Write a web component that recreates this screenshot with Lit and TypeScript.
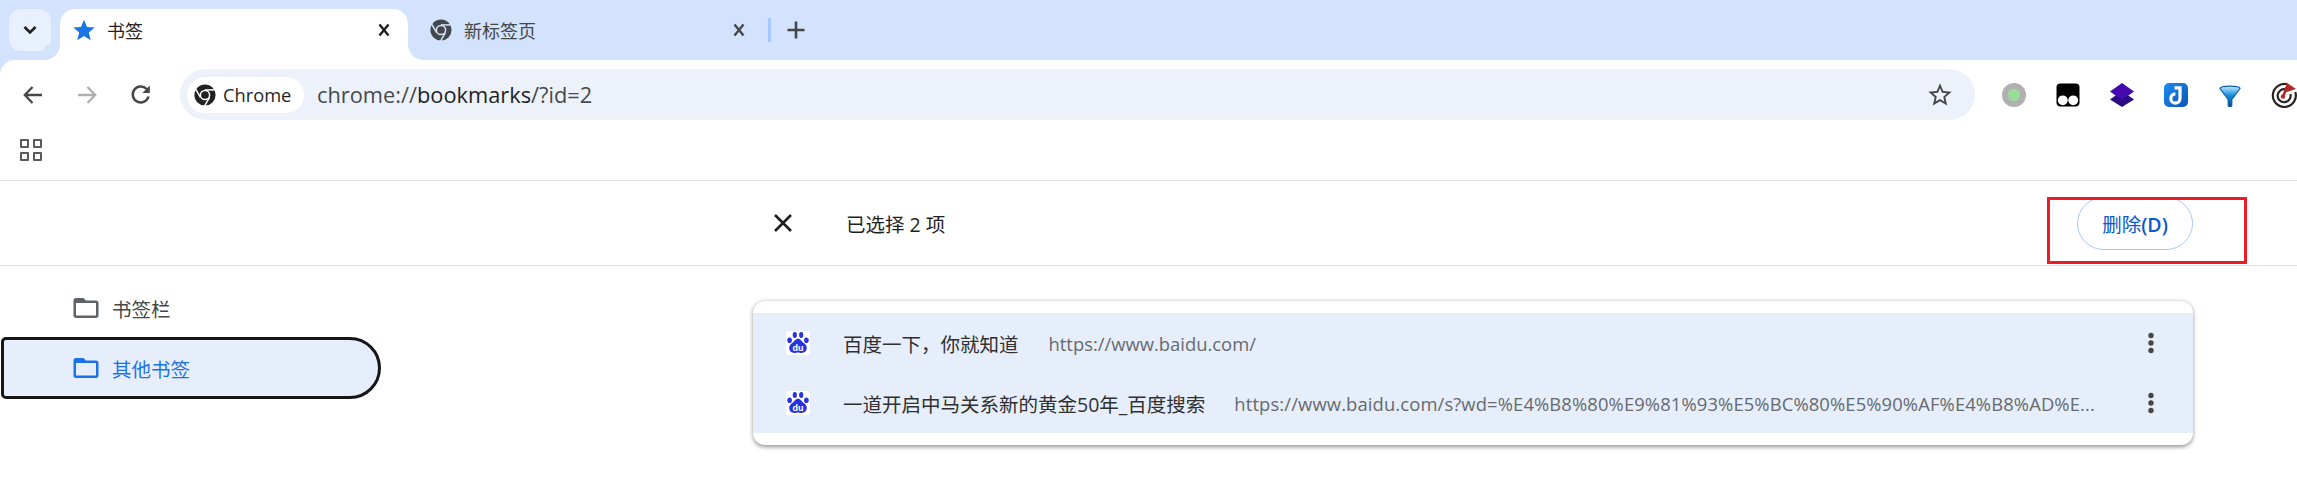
import { LitElement, html, css, svg } from "lit";
import { customElement } from "lit/decorators.js";

const chromeIcon = html`<svg class="i24" viewBox="0 0 24 24">
  <circle cx="12" cy="12" r="10.6" fill="#222"></circle>
  <g stroke="#fff" stroke-width="1.500" fill="none">
    <line x1="12" y1="6.900" x2="23" y2="6.900"></line>
    <line x1="12" y1="6.900" x2="23" y2="6.900" transform="rotate(120 12 12)"></line>
    <line x1="12" y1="6.900" x2="23" y2="6.900" transform="rotate(240 12 12)"></line>
    <circle cx="12" cy="12" r="4.600" fill="#222"></circle>
  </g>
</svg>`;

const chromeIconGrey = html`<svg class="i24" viewBox="0 0 24 24">
  <circle cx="12" cy="12" r="10.600" fill="#44484d"></circle>
  <g stroke="#d3e3fd" stroke-width="1.500" fill="none">
    <line x1="12" y1="6.900" x2="23" y2="6.900"></line>
    <line x1="12" y1="6.900" x2="23" y2="6.900" transform="rotate(120 12 12)"></line>
    <line x1="12" y1="6.900" x2="23" y2="6.900" transform="rotate(240 12 12)"></line>
    <circle cx="12" cy="12" r="4.600" fill="#44484d"></circle>
  </g>
</svg>`;

const closeX = (c: string) => html`<svg class="i20" viewBox="0 0 20 20">
  <path d="M5.500 4.500 L14.500 15.500 M14.500 4.500 L5.500 15.500" stroke=${c} stroke-width="2.400" fill="none"></path>
</svg>`;

const folderPath = svg`<path d="M20 6h-8l-2-2H4c-1.100 0-1.990.9-1.990 2L2 18c0 1.100.9 2 2 2h16c1.100 0 2-.9 2-2V8c0-1.100-.9-2-2-2zm0 12H4V8h16v10z"></path>`;

const baidu = html`<div class="fav"><svg class="i24" viewBox="0 0 24 24">
  <rect width="24" height="24" rx="2" fill="#fff"></rect>
  <g fill="#2932e1">
    <ellipse cx="8.800" cy="4" rx="2.100" ry="2.900"></ellipse>
    <ellipse cx="15.200" cy="4" rx="2.100" ry="2.900"></ellipse>
    <ellipse cx="3.600" cy="9.200" rx="2.300" ry="2.800"></ellipse>
    <ellipse cx="20.400" cy="9.200" rx="2.300" ry="2.800"></ellipse>
    <path d="M12 7.800c2.800 0 3.400 2.600 5.400 4 2 1.300 3.400 2.800 3.400 5 0 3.400-2.600 5.200-5.200 5.200-1.500 0-2.500-.5-3.600-.5s-2.100.5-3.700.5c-2.600 0-5.100-1.800-5.100-5.200 0-2.200 1.400-3.700 3.400-5 2-1.400 2.600-4 5.400-4z"></path>
  </g>
  <text x="12" y="19.800" text-anchor="middle" class="du">du</text>
</svg></div>`;

const menuDots = html`<svg class="dots" viewBox="0 0 6 24" fill="#444746">
  <circle cx="3" cy="4.500" r="2.700"></circle><circle cx="3" cy="12" r="2.700"></circle><circle cx="3" cy="19.500" r="2.700"></circle>
</svg>`;

const exts = [
  html`<svg class="i26" viewBox="0 0 26 26"><circle cx="13" cy="13" r="12" fill="#b0b0b0"></circle><circle cx="13" cy="13" r="6.200" fill="#98dc98"></circle></svg>`,
  html`<svg class="i26" viewBox="0 0 26 26"><rect x="1.500" y="1.500" width="23" height="23" rx="4" fill="#000"></rect><circle cx="7.800" cy="18.300" r="4.900" fill="#fff"></circle><circle cx="18.200" cy="18.300" r="4.900" fill="#fff"></circle></svg>`,
  html`<svg class="i26" viewBox="0 0 26 26"><path d="M13 9 25 17.500 13 25 1 17.500z" fill="#2b0a82"></path><path d="M13 1 25 9.500 13 18 1 9.500z" fill="#4309ac"></path></svg>`,
  html`<svg class="i26" viewBox="0 0 26 26"><defs><linearGradient id="jg" x1="0" y1="0" x2="1" y2="1"><stop offset="0" stop-color="#1e8cf0"></stop><stop offset="1" stop-color="#0b55b5"></stop></linearGradient></defs><rect x="1" y="1" width="24" height="24" rx="5" fill="url(#jg)"></rect><path d="M11.500 5.800h5.500V16.500a4.600 4.600 0 1 1-4.600-4.600" fill="none" stroke="#fff" stroke-width="3.200"></path></svg>`,
  html`<svg class="i26" viewBox="0 0 26 26"><defs><linearGradient id="fg" x1="0" y1="0" x2="0" y2="1"><stop offset="0" stop-color="#c8ecff"></stop><stop offset=".45" stop-color="#1a8ee0"></stop><stop offset="1" stop-color="#0a4a80"></stop></linearGradient></defs><path d="M3 6.500C3 3.200 23 3.200 23 6.500L14.800 17.500V23.500c0 1.300-3.600 1.300-3.600 0V17.500z" fill="url(#fg)" stroke="#0a5fa8" stroke-width="1.200"></path></svg>`,
  html`<svg class="i26" viewBox="0 0 26 26" fill="none"><path d="M16 2.300A11.500 11.500 0 1 0 24.300 10" stroke="#2a2422" stroke-width="2.200"></path><path d="M15 7.500A6.500 6.500 0 1 0 19.400 12" stroke="#2a2422" stroke-width="2.200"></path><path d="M12.500 14 L15.500 5" stroke="#a82626" stroke-width="2.400"></path><path d="M15.500 0.500 L25 7 L14.500 10.500z" fill="#b02a2a"></path><circle cx="12" cy="14.500" r="2.200" fill="#b02a2a"></circle></svg>`,
];

@customElement("app-root")
export class AppRoot extends LitElement {
  static styles = css`
    :host {
      display: block;
      width: 2297px;
      height: 486px;
      overflow: hidden;
      background: #fff;
      position: relative;
      font-family: "Open Sans", "Noto Sans CJK SC", sans-serif;
      color: #1f1f1f;
    }
    svg { display: block; flex: none; }
    .i20 { width: 20px; height: 20px; }
    .i24 { width: 24px; height: 24px; }
    .i26 { width: 26px; height: 26px; }
    .i28 { width: 28px; height: 28px; }
    .i30 { width: 30px; height: 30px; }

    .chrome { background: #d3e3fd; }
    .strip { height: 60px; box-sizing: border-box; padding: 9px 0 0 9px; display: flex; align-items: flex-start; }
    .tabsearch { width: 42px; height: 42px; border-radius: 12px; background: #e8f0fe; display: flex; align-items: center; justify-content: center; margin-right: 9px; }
    .tab { height: 51px; box-sizing: border-box; display: flex; align-items: center; font-size: 18px; padding-bottom: 9px; flex: none; }
    .tab.active { width: 348px; background: #fff; border-radius: 15px 15px 0 0; padding-left: 12px; padding-right: 14px; gap: 11px; position: relative; }
    .tab.active::before, .tab.active::after { content: ""; position: absolute; bottom: 0; width: 15px; height: 15px; background: radial-gradient(circle at var(--cx) 0, #d3e3fd 14.500px, #fff 15px); }
    .tab.active::before { left: -15px; --cx: 0; }
    .tab.active::after { right: -15px; --cx: 15px; }
    .tab.other { width: 360px; padding-left: 21px; padding-right: 19px; gap: 11px; color: #444746; }
    .tab .x { margin-left: auto; }
    .sep { width: 2.500px; height: 24px; background: #a8c7fa; margin-top: 9px; flex: none; }
    .plus { margin: 9px 0 0 13px; }

    .toolbar { background: #fff; border-top-left-radius: 15px; height: 64px; box-sizing: border-box; padding: 9px 0 4px 6px; display: flex; align-items: center; }
    .nav { width: 54px; display: flex; justify-content: center; flex: none; }
    .omni { width: 1795px; height: 51px; margin-left: 12px; flex: none; box-sizing: border-box; background: #ecf1fa; border-radius: 26px; padding: 0 21px 0 7px; display: flex; align-items: center; }
    .chip { width: 117px; height: 36px; box-sizing: border-box; background: #fff; border-radius: 18px; padding-left: 6px; display: flex; align-items: center; gap: 6px; font-size: 18.300px; flex: none; }
    .url { margin-left: 13px; font-size: 21.800px; color: #474a4d; }
    .url b { font-weight: 400; color: #1f1f1f; }
    .omni .i28 { margin-left: auto; }
    .exts { display: flex; margin-left: 12px; flex: none; }
    .ext { width: 54px; display: flex; justify-content: center; flex: none; }

    .bmbar { height: 57px; box-sizing: border-box; border-bottom: 1.500px solid #e0e0e0; padding: 15px 0 0 20px; }
    .apps { display: grid; grid-template-columns: 9px 9px; grid-auto-rows: 9px; gap: 4px; }
    .apps i { border: 2px solid #5a5a5a; border-radius: 1px; }

    .select { height: 85px; box-sizing: border-box; border-bottom: 1.500px solid #e0e0e0; display: flex; align-items: center; padding-left: 770px; padding-right: 104px; }
    .closebig { width: 26px; height: 26px; }
    .count { margin-left: 50px; font-size: 19.500px; }
    .del { margin-left: auto; width: 116px; height: 53px; box-sizing: border-box; border: 1.500px solid #a8c7fa; border-radius: 27px; display: flex; align-items: center; justify-content: center; font-size: 19.500px; color: #0b57d0; }
    .del b { font-weight: 600; }
    .redbox { position: absolute; left: 2047px; top: 197px; width: 200px; height: 67px; box-sizing: border-box; border: 3px solid #ed1c24; }

    .main { display: flex; align-items: flex-start; }
    .side { width: 753px; flex: none; box-sizing: border-box; padding: 12px 0 0 2px; }
    .item { width: 378px; height: 60px; box-sizing: border-box; padding-left: 69px; display: flex; align-items: center; gap: 11px; font-size: 19.500px; color: #474747; fill: #5f6368; }
    .item.sel { background: #e7eefb; color: #1a73e8; fill: #1a73e8; outline: 3px solid #161616; outline-offset: -2px; border-radius: 4px 31px 31px 4px; }

    .card { width: 1440px; margin-top: 35px; flex: none; background: #fff; border-radius: 12px; padding: 12px 0; box-shadow: 0 1.500px 4.500px rgba(0,0,0,.42); }
    .row { height: 60px; background: #e7eefb; display: flex; align-items: center; padding-left: 33px; font-size: 19.500px; }
    .fav { width: 24px; height: 24px; flex: none; }
    .du { font: 700 9px "Liberation Sans", sans-serif; fill: #fff; }
    .title { margin-left: 33px; white-space: nowrap; flex: none; color: #303030; }
    .link { margin-left: 30px; color: #666a6e; font-size: 18.400px; white-space: nowrap; flex: 1; min-width: 0; }
    .link.long { margin-left: 29px; letter-spacing: 0.12px; }
    .dots { width: 6px; height: 24px; margin: 0 39px 0 50px; flex: none; }
  `;

  render() {
    return html`
      <div class="chrome">
        <div class="strip">
          <div class="tabsearch"><svg class="i20" viewBox="0 0 20 20"><path d="M4.500 7 10 12.500 15.500 7" stroke="#1f1f1f" stroke-width="2.600" fill="none"></path></svg></div>
          <div class="tab active">
            <svg class="i24" viewBox="0 0 24 24" fill="#1a73e8"><path d="M12 1.800 15 9l7.700.6-5.900 5 1.900 7.600L12 18l-6.700 4.200 1.900-7.600-5.900-5L9 9z"></path></svg>
            <span>书签</span>
            <span class="x">${closeX("#1f1f1f")}</span>
          </div>
          <div class="tab other">
            ${chromeIconGrey}
            <span>新标签页</span>
            <span class="x">${closeX("#444746")}</span>
          </div>
          <div class="sep"></div>
          <svg class="i24 plus" viewBox="0 0 24 24"><path d="M12 3.500v17M3.500 12h17" stroke="#444746" stroke-width="2.600" fill="none"></path></svg>
        </div>
        <div class="toolbar">
          <div class="nav"><svg class="i24" viewBox="0 0 24 24" fill="none" stroke="#474747" stroke-width="2.300"><path d="M21 12H4M11.500 4 3.800 12l7.700 8"></path></svg></div>
          <div class="nav"><svg class="i24" viewBox="0 0 24 24" fill="none" stroke="#b0b0b0" stroke-width="2.300"><path d="M3 12h17M12.500 4l7.700 8-7.700 8"></path></svg></div>
          <div class="nav"><svg class="i24" viewBox="0 0 24 24" fill="none" stroke="#474747" stroke-width="2.500"><path d="M19.500 13.500A8 8 0 1 1 17.600 6"></path><path d="M20.800 2.500v7.400h-7.400" stroke="none" fill="#474747"></path></svg></div>
          <div class="omni">
            <div class="chip">${chromeIcon}<span>Chrome</span></div>
            <div class="url">chrome://<b>bookmarks</b>/?id=2</div>
            <svg class="i28" viewBox="0 0 24 24" fill="#474747"><path d="M22 9.240l-7.190-.62L12 2 9.190 8.630 2 9.240l5.460 4.730L5.820 21 12 17.270 18.180 21l-1.630-7.030L22 9.240zM12 15.400l-3.760 2.270 1-4.280-3.320-2.880 4.380-.38L12 6.100l1.710 4.040 4.380.38-3.320 2.880 1 4.280L12 15.400z"></path></svg>
          </div>
          <div class="exts">${exts.map((e) => html`<div class="ext">${e}</div>`)}</div>
        </div>
      </div>
      <div class="bmbar"><div class="apps"><i></i><i></i><i></i><i></i></div></div>
      <div class="select">
        <svg class="closebig" viewBox="0 0 26 26"><path d="M5 5 21 21M21 5 5 21" stroke="#1f1f1f" stroke-width="2.600" fill="none"></path></svg>
        <div class="count">已选择 2 项</div>
        <div class="del"><span>删除<b>(D)</b></span></div>
      </div>
      <div class="redbox"></div>
      <div class="main">
        <div class="side">
          <div class="item"><svg class="i30" viewBox="0 0 24 24">${folderPath}</svg><span>书签栏</span></div>
          <div class="item sel"><svg class="i30" viewBox="0 0 24 24">${folderPath}</svg><span>其他书签</span></div>
        </div>
        <div class="card">
          <div class="row">${baidu}<div class="title">百度一下，你就知道</div><div class="link">https://www.baidu.com/</div>${menuDots}</div>
          <div class="row">${baidu}<div class="title">一道开启中马关系新的黄金50年_百度搜索</div><div class="link long">https://www.baidu.com/s?wd=%E4%B8%80%E9%81%93%E5%BC%80%E5%90%AF%E4%B8%AD%E...</div>${menuDots}</div>
        </div>
      </div>
    `;
  }
}
